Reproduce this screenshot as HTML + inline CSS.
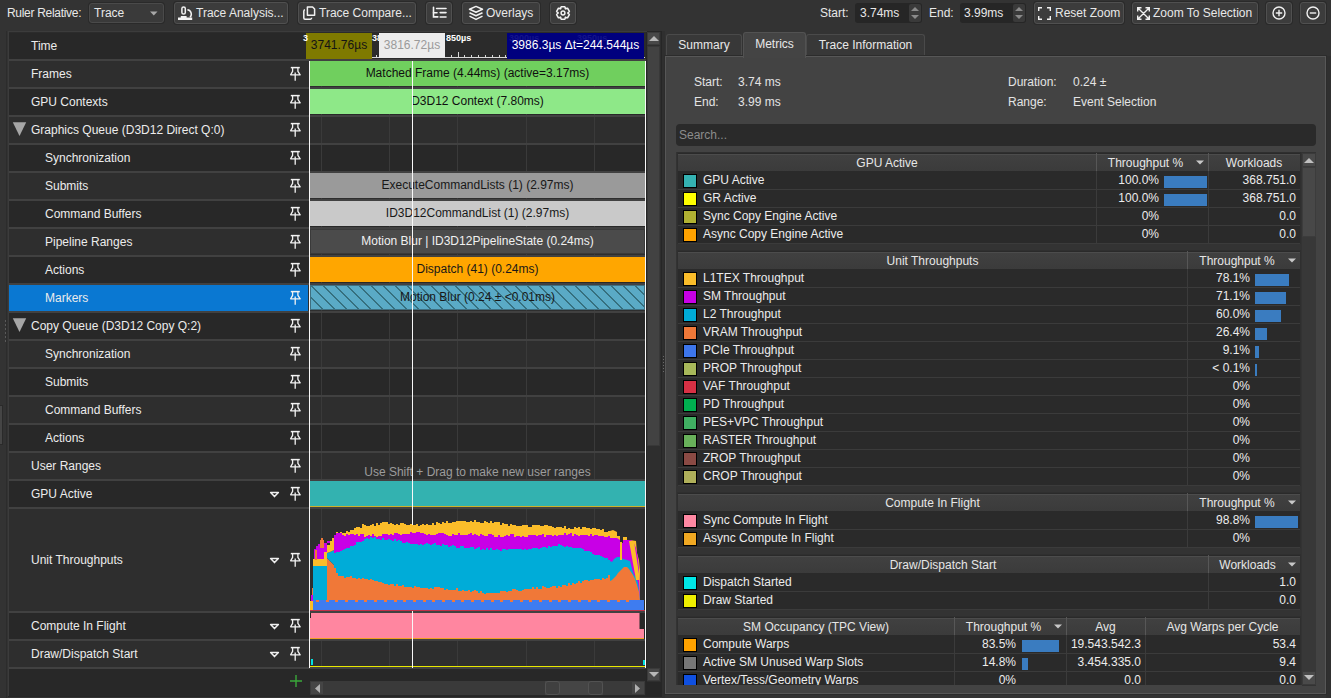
<!DOCTYPE html><html><head><meta charset="utf-8"><style>
html,body{margin:0;padding:0;}
body{width:1331px;height:698px;overflow:hidden;position:relative;background:#333333;font-family:"Liberation Sans",sans-serif;}
.t{position:absolute;white-space:pre;line-height:14px;height:14px;}
.r{position:absolute;box-sizing:border-box;}
.btn{position:absolute;box-sizing:border-box;background:#3c3c3c;border:1px solid #505050;border-radius:3px;box-shadow:0 0 0 1px #2a2a2a;}
svg{position:absolute;overflow:visible;}
</style></head><body>
<div class="t" style="left:7px;top:6px;color:#e8e8e8;font-size:12px;letter-spacing:-0.3px;">Ruler Relative:</div>
<div class="btn" style="left:89px;top:3px;width:75px;height:20px;background:#3a3a3a;border-color:#4a4a4a"></div>
<div class="t" style="left:94px;top:6px;color:#e8e8e8;font-size:12px;">Trace</div>
<svg style="left:150px;top:11px" width="8" height="5"><path d="M0 0.5H7.5L3.75 4.5Z" fill="#a8a8a8"/></svg>
<div class="btn" style="left:174px;top:2px;width:114px;height:22px"></div>
<div class="btn" style="left:298px;top:2px;width:118px;height:22px"></div>
<div class="btn" style="left:426px;top:2px;width:26px;height:22px"></div>
<div class="btn" style="left:462px;top:2px;width:78px;height:22px"></div>
<div class="btn" style="left:550px;top:2px;width:26px;height:22px"></div>
<svg style="left:175px;top:2px" width="22" height="22" viewBox="0 0 22 22"><g fill="none" stroke="#f2f2f2" stroke-width="1.5"><rect x="6.9" y="4.9" width="3.4" height="7.2" rx="1.7"/><path d="M12.4 7.7A4.4 4.4 0 0 1 15 15.2"/></g><path d="M5.8 14H11.6V15.5H17.2V18H3V15.5H5.8Z" fill="#f2f2f2"/></svg>
<div class="t" style="left:196px;top:6px;color:#e8e8e8;font-size:12px;">Trace Analysis...</div>
<svg style="left:299px;top:2px" width="22" height="22" viewBox="0 0 22 22"><g fill="none" stroke="#f2f2f2" stroke-width="1.5" stroke-linejoin="round"><path d="M8.4 4.9H13.6L15.6 7V13.2H8.4Z"/><path d="M6 7.8Q4.8 8 4.8 9.2V16Q4.8 17.2 6 17.2H11.4Q12.6 17.2 12.7 15.8"/></g></svg>
<div class="t" style="left:319px;top:6px;color:#e8e8e8;font-size:12px;">Trace Compare...</div>
<svg style="left:428px;top:2px" width="22" height="22" viewBox="0 0 22 22"><g fill="none" stroke="#f2f2f2" stroke-width="1.6" stroke-linecap="round"><path d="M5.5 5.2V14.9H9.8"/><path d="M5.5 10.7H9"/><path d="M8.6 6.5H18M12.2 10.6H18M12.2 15H18"/></g></svg>
<svg style="left:465px;top:2px" width="22" height="22" viewBox="0 0 22 22"><g fill="none" stroke="#f2f2f2" stroke-width="1.5" stroke-linejoin="round"><path d="M11 4.4L17.5 7.3 11 10.3 4.5 7.3Z"/><path d="M4.5 10.8L11 13.8 17.5 10.8"/><path d="M4.5 14.1L11 17.4 17.5 14.1"/></g></svg>
<div class="t" style="left:486px;top:6px;color:#e8e8e8;font-size:12px;">Overlays</div>
<svg style="left:556px;top:6px" width="14" height="14" viewBox="0 0 14 14"><g fill="none" stroke="#f2f2f2" stroke-width="1.5" stroke-linejoin="round"><path d="M4.26 2.94 L5.18 0.66 L8.82 0.66 L9.74 2.94 L9.15 2.60 L11.58 2.25 L13.40 5.40 L11.89 7.34 L11.89 6.66 L13.40 8.60 L11.58 11.75 L9.15 11.40 L9.74 11.06 L8.82 13.34 L5.18 13.34 L4.26 11.06 L4.85 11.40 L2.42 11.75 L0.60 8.60 L2.11 6.66 L2.11 7.34 L0.60 5.40 L2.42 2.25 L4.85 2.60Z"/><circle cx="7" cy="7" r="1.9"/></g></svg>
<div class="t" style="left:820px;top:6px;color:#e8e8e8;font-size:12px;">Start:</div>
<div class="r" style="left:855px;top:3px;width:67px;height:20px;background:#262626;border-radius:3px;"></div>
<div class="r" style="left:909px;top:4px;width:12px;height:18px;background:#3a3a3a;border-radius:2px;"></div>
<svg style="left:910px;top:6px" width="10" height="14"><path d="M1 5L5 1 9 5Z M1 9L5 13 9 9Z" fill="#8a8a8a"/></svg>
<div class="t" style="left:860px;top:6px;color:#e8e8e8;font-size:12px;">3.74ms</div>
<div class="t" style="left:929px;top:6px;color:#e8e8e8;font-size:12px;">End:</div>
<div class="r" style="left:960px;top:3px;width:66px;height:20px;background:#262626;border-radius:3px;"></div>
<div class="r" style="left:1013px;top:4px;width:12px;height:18px;background:#3a3a3a;border-radius:2px;"></div>
<svg style="left:1014px;top:6px" width="10" height="14"><path d="M1 5L5 1 9 5Z M1 9L5 13 9 9Z" fill="#8a8a8a"/></svg>
<div class="t" style="left:964px;top:6px;color:#e8e8e8;font-size:12px;">3.99ms</div>
<div class="btn" style="left:1034px;top:2px;width:90px;height:22px"></div>
<svg style="left:1038px;top:7px" width="13" height="13" viewBox="0 0 13 13"><g fill="none" stroke="#f0f0f0" stroke-width="1.4"><path d="M.7 4V.7H4M9 .7h3.3V4M12.3 9v3.3H9M4 12.3H.7V9"/></g></svg>
<div class="t" style="left:1055px;top:6px;color:#e8e8e8;font-size:12px;">Reset Zoom</div>
<div class="btn" style="left:1132px;top:2px;width:126px;height:22px"></div>
<svg style="left:1137px;top:7px" width="13" height="13" viewBox="0 0 13 13"><g fill="none" stroke="#f0f0f0" stroke-width="1.4"><path d="M.7 4.5V.7h3.8M8.5.7h3.8v3.8M12.3 8.5v3.8H8.5M4.5 12.3H.7V8.5M1 1l11 11M12 1L1 12"/></g></svg>
<div class="t" style="left:1153px;top:6px;color:#e8e8e8;font-size:12px;">Zoom To Selection</div>
<div class="btn" style="left:1266px;top:2px;width:26px;height:22px"></div>
<div class="btn" style="left:1300px;top:2px;width:26px;height:22px"></div>
<svg style="left:1272px;top:6px" width="14" height="14" viewBox="0 0 14 14"><g fill="none" stroke="#f0f0f0" stroke-width="1.4"><circle cx="7" cy="7" r="6"/><path d="M3.8 7h6.4M7 3.8v6.4"/></g></svg>
<svg style="left:1306px;top:6px" width="14" height="14" viewBox="0 0 14 14"><g fill="none" stroke="#f0f0f0" stroke-width="1.4"><circle cx="7" cy="7" r="6"/><path d="M3.8 7h6.4"/></g></svg>
<div class="r" style="left:8px;top:31px;width:654px;height:666px;background:#262626;"></div>
<div class="r" style="left:8px;top:31px;width:639px;height:1px;background:#3c3c3c;"></div>
<div class="r" style="left:8px;top:31px;width:1px;height:665px;background:#3c3c3c;"></div>
<div class="r" style="left:9px;top:32px;width:299px;height:664px;background:#2c2c2c;"></div>
<div class="r" style="left:308px;top:32px;width:338px;height:664px;background:#2b2b2b;"></div>
<div class="r" style="left:5px;top:320px;width:2px;height:2px;background:#5a5a5a;"></div>
<div class="r" style="left:5px;top:324px;width:2px;height:2px;background:#5a5a5a;"></div>
<div class="r" style="left:5px;top:328px;width:2px;height:2px;background:#5a5a5a;"></div>
<div class="r" style="left:5px;top:332px;width:2px;height:2px;background:#5a5a5a;"></div>
<div class="r" style="left:5px;top:336px;width:2px;height:2px;background:#5a5a5a;"></div>
<div class="r" style="left:5px;top:340px;width:2px;height:2px;background:#5a5a5a;"></div>
<div class="r" style="left:0px;top:405px;width:3px;height:40px;background:#454545;border:1px solid #2a2a2a;border-left:none;"></div>
<div class="r" style="left:6px;top:31px;width:1px;height:667px;background:#2c2c2c;"></div>
<div class="r" style="left:9px;top:33px;width:637px;height:26px;background:#282828;"></div>
<div class="r" style="left:9px;top:61px;width:637px;height:26px;background:#2e2e2e;"></div>
<div class="r" style="left:9px;top:89px;width:637px;height:26px;background:#282828;"></div>
<div class="r" style="left:9px;top:117px;width:637px;height:26px;background:#2e2e2e;"></div>
<div class="r" style="left:9px;top:145px;width:637px;height:26px;background:#282828;"></div>
<div class="r" style="left:9px;top:173px;width:637px;height:26px;background:#2e2e2e;"></div>
<div class="r" style="left:9px;top:201px;width:637px;height:26px;background:#282828;"></div>
<div class="r" style="left:9px;top:229px;width:637px;height:26px;background:#2e2e2e;"></div>
<div class="r" style="left:9px;top:257px;width:637px;height:26px;background:#282828;"></div>
<div class="r" style="left:9px;top:285px;width:637px;height:26px;background:#2e2e2e;"></div>
<div class="r" style="left:9px;top:313px;width:637px;height:26px;background:#282828;"></div>
<div class="r" style="left:9px;top:341px;width:637px;height:26px;background:#2e2e2e;"></div>
<div class="r" style="left:9px;top:369px;width:637px;height:26px;background:#282828;"></div>
<div class="r" style="left:9px;top:397px;width:637px;height:26px;background:#2e2e2e;"></div>
<div class="r" style="left:9px;top:425px;width:637px;height:26px;background:#282828;"></div>
<div class="r" style="left:9px;top:453px;width:637px;height:26px;background:#2e2e2e;"></div>
<div class="r" style="left:9px;top:481px;width:637px;height:26px;background:#282828;"></div>
<div class="r" style="left:9px;top:509px;width:637px;height:102px;background:#2e2e2e;"></div>
<div class="r" style="left:9px;top:613px;width:637px;height:26px;background:#282828;"></div>
<div class="r" style="left:9px;top:641px;width:637px;height:26px;background:#2e2e2e;"></div>
<div class="r" style="left:9px;top:669px;width:637px;height:27px;background:#282828;"></div>
<div class="r" style="left:9px;top:59px;width:637px;height:2px;background:#414141;"></div>
<div class="r" style="left:9px;top:87px;width:637px;height:2px;background:#414141;"></div>
<div class="r" style="left:9px;top:115px;width:637px;height:2px;background:#414141;"></div>
<div class="r" style="left:9px;top:143px;width:637px;height:2px;background:#414141;"></div>
<div class="r" style="left:9px;top:171px;width:637px;height:2px;background:#414141;"></div>
<div class="r" style="left:9px;top:199px;width:637px;height:2px;background:#414141;"></div>
<div class="r" style="left:9px;top:227px;width:637px;height:2px;background:#414141;"></div>
<div class="r" style="left:9px;top:255px;width:637px;height:2px;background:#414141;"></div>
<div class="r" style="left:9px;top:283px;width:637px;height:2px;background:#414141;"></div>
<div class="r" style="left:9px;top:311px;width:637px;height:2px;background:#414141;"></div>
<div class="r" style="left:9px;top:339px;width:637px;height:2px;background:#414141;"></div>
<div class="r" style="left:9px;top:367px;width:637px;height:2px;background:#414141;"></div>
<div class="r" style="left:9px;top:395px;width:637px;height:2px;background:#414141;"></div>
<div class="r" style="left:9px;top:423px;width:637px;height:2px;background:#414141;"></div>
<div class="r" style="left:9px;top:451px;width:637px;height:2px;background:#414141;"></div>
<div class="r" style="left:9px;top:479px;width:637px;height:2px;background:#414141;"></div>
<div class="r" style="left:9px;top:507px;width:637px;height:2px;background:#414141;"></div>
<div class="r" style="left:9px;top:611px;width:637px;height:2px;background:#414141;"></div>
<div class="r" style="left:9px;top:639px;width:637px;height:2px;background:#414141;"></div>
<div class="r" style="left:9px;top:667px;width:637px;height:2px;background:#414141;"></div>
<div class="r" style="left:9px;top:285px;width:299px;height:26px;background:#0a78d2;"></div>
<div class="t" style="left:31px;top:39px;color:#ececec;font-size:12px;">Time</div>
<div class="t" style="left:31px;top:67px;color:#ececec;font-size:12px;">Frames</div>
<svg style="left:284px;top:64px" width="22" height="22" viewBox="0 0 22 22"><g fill="none" stroke="#f2f2f2" stroke-width="1.3" stroke-linejoin="round"><path d="M6.8 3.6H15.8" stroke-width="1.5"/><path d="M8.6 3.6V7.4L6.6 10.8H16.2L13.9 7.4V3.6"/><path d="M11.2 8.4V16.8"/></g></svg>
<div class="t" style="left:31px;top:95px;color:#ececec;font-size:12px;">GPU Contexts</div>
<svg style="left:284px;top:92px" width="22" height="22" viewBox="0 0 22 22"><g fill="none" stroke="#f2f2f2" stroke-width="1.3" stroke-linejoin="round"><path d="M6.8 3.6H15.8" stroke-width="1.5"/><path d="M8.6 3.6V7.4L6.6 10.8H16.2L13.9 7.4V3.6"/><path d="M11.2 8.4V16.8"/></g></svg>
<div class="t" style="left:31px;top:123px;color:#ececec;font-size:12px;">Graphics Queue (D3D12 Direct Q:0)</div>
<svg style="left:284px;top:120px" width="22" height="22" viewBox="0 0 22 22"><g fill="none" stroke="#f2f2f2" stroke-width="1.3" stroke-linejoin="round"><path d="M6.8 3.6H15.8" stroke-width="1.5"/><path d="M8.6 3.6V7.4L6.6 10.8H16.2L13.9 7.4V3.6"/><path d="M11.2 8.4V16.8"/></g></svg>
<svg style="left:12px;top:122px" width="15" height="15" viewBox="0 0 15 15"><path d="M0.8 0.3H14.2L7.5 13.9Z" fill="#a6a6a6"/></svg>
<div class="t" style="left:45px;top:151px;color:#ececec;font-size:12px;">Synchronization</div>
<svg style="left:284px;top:148px" width="22" height="22" viewBox="0 0 22 22"><g fill="none" stroke="#f2f2f2" stroke-width="1.3" stroke-linejoin="round"><path d="M6.8 3.6H15.8" stroke-width="1.5"/><path d="M8.6 3.6V7.4L6.6 10.8H16.2L13.9 7.4V3.6"/><path d="M11.2 8.4V16.8"/></g></svg>
<div class="t" style="left:45px;top:179px;color:#ececec;font-size:12px;">Submits</div>
<svg style="left:284px;top:176px" width="22" height="22" viewBox="0 0 22 22"><g fill="none" stroke="#f2f2f2" stroke-width="1.3" stroke-linejoin="round"><path d="M6.8 3.6H15.8" stroke-width="1.5"/><path d="M8.6 3.6V7.4L6.6 10.8H16.2L13.9 7.4V3.6"/><path d="M11.2 8.4V16.8"/></g></svg>
<div class="t" style="left:45px;top:207px;color:#ececec;font-size:12px;">Command Buffers</div>
<svg style="left:284px;top:204px" width="22" height="22" viewBox="0 0 22 22"><g fill="none" stroke="#f2f2f2" stroke-width="1.3" stroke-linejoin="round"><path d="M6.8 3.6H15.8" stroke-width="1.5"/><path d="M8.6 3.6V7.4L6.6 10.8H16.2L13.9 7.4V3.6"/><path d="M11.2 8.4V16.8"/></g></svg>
<div class="t" style="left:45px;top:235px;color:#ececec;font-size:12px;">Pipeline Ranges</div>
<svg style="left:284px;top:232px" width="22" height="22" viewBox="0 0 22 22"><g fill="none" stroke="#f2f2f2" stroke-width="1.3" stroke-linejoin="round"><path d="M6.8 3.6H15.8" stroke-width="1.5"/><path d="M8.6 3.6V7.4L6.6 10.8H16.2L13.9 7.4V3.6"/><path d="M11.2 8.4V16.8"/></g></svg>
<div class="t" style="left:45px;top:263px;color:#ececec;font-size:12px;">Actions</div>
<svg style="left:284px;top:260px" width="22" height="22" viewBox="0 0 22 22"><g fill="none" stroke="#f2f2f2" stroke-width="1.3" stroke-linejoin="round"><path d="M6.8 3.6H15.8" stroke-width="1.5"/><path d="M8.6 3.6V7.4L6.6 10.8H16.2L13.9 7.4V3.6"/><path d="M11.2 8.4V16.8"/></g></svg>
<div class="t" style="left:45px;top:291px;color:#ececec;font-size:12px;">Markers</div>
<svg style="left:284px;top:288px" width="22" height="22" viewBox="0 0 22 22"><g fill="none" stroke="#f2f2f2" stroke-width="1.3" stroke-linejoin="round"><path d="M6.8 3.6H15.8" stroke-width="1.5"/><path d="M8.6 3.6V7.4L6.6 10.8H16.2L13.9 7.4V3.6"/><path d="M11.2 8.4V16.8"/></g></svg>
<div class="t" style="left:31px;top:319px;color:#ececec;font-size:12px;">Copy Queue (D3D12 Copy Q:2)</div>
<svg style="left:284px;top:316px" width="22" height="22" viewBox="0 0 22 22"><g fill="none" stroke="#f2f2f2" stroke-width="1.3" stroke-linejoin="round"><path d="M6.8 3.6H15.8" stroke-width="1.5"/><path d="M8.6 3.6V7.4L6.6 10.8H16.2L13.9 7.4V3.6"/><path d="M11.2 8.4V16.8"/></g></svg>
<svg style="left:12px;top:318px" width="15" height="15" viewBox="0 0 15 15"><path d="M0.8 0.3H14.2L7.5 13.9Z" fill="#a6a6a6"/></svg>
<div class="t" style="left:45px;top:347px;color:#ececec;font-size:12px;">Synchronization</div>
<svg style="left:284px;top:344px" width="22" height="22" viewBox="0 0 22 22"><g fill="none" stroke="#f2f2f2" stroke-width="1.3" stroke-linejoin="round"><path d="M6.8 3.6H15.8" stroke-width="1.5"/><path d="M8.6 3.6V7.4L6.6 10.8H16.2L13.9 7.4V3.6"/><path d="M11.2 8.4V16.8"/></g></svg>
<div class="t" style="left:45px;top:375px;color:#ececec;font-size:12px;">Submits</div>
<svg style="left:284px;top:372px" width="22" height="22" viewBox="0 0 22 22"><g fill="none" stroke="#f2f2f2" stroke-width="1.3" stroke-linejoin="round"><path d="M6.8 3.6H15.8" stroke-width="1.5"/><path d="M8.6 3.6V7.4L6.6 10.8H16.2L13.9 7.4V3.6"/><path d="M11.2 8.4V16.8"/></g></svg>
<div class="t" style="left:45px;top:403px;color:#ececec;font-size:12px;">Command Buffers</div>
<svg style="left:284px;top:400px" width="22" height="22" viewBox="0 0 22 22"><g fill="none" stroke="#f2f2f2" stroke-width="1.3" stroke-linejoin="round"><path d="M6.8 3.6H15.8" stroke-width="1.5"/><path d="M8.6 3.6V7.4L6.6 10.8H16.2L13.9 7.4V3.6"/><path d="M11.2 8.4V16.8"/></g></svg>
<div class="t" style="left:45px;top:431px;color:#ececec;font-size:12px;">Actions</div>
<svg style="left:284px;top:428px" width="22" height="22" viewBox="0 0 22 22"><g fill="none" stroke="#f2f2f2" stroke-width="1.3" stroke-linejoin="round"><path d="M6.8 3.6H15.8" stroke-width="1.5"/><path d="M8.6 3.6V7.4L6.6 10.8H16.2L13.9 7.4V3.6"/><path d="M11.2 8.4V16.8"/></g></svg>
<div class="t" style="left:31px;top:459px;color:#ececec;font-size:12px;">User Ranges</div>
<svg style="left:284px;top:456px" width="22" height="22" viewBox="0 0 22 22"><g fill="none" stroke="#f2f2f2" stroke-width="1.3" stroke-linejoin="round"><path d="M6.8 3.6H15.8" stroke-width="1.5"/><path d="M8.6 3.6V7.4L6.6 10.8H16.2L13.9 7.4V3.6"/><path d="M11.2 8.4V16.8"/></g></svg>
<div class="t" style="left:31px;top:487px;color:#ececec;font-size:12px;">GPU Active</div>
<svg style="left:284px;top:484px" width="22" height="22" viewBox="0 0 22 22"><g fill="none" stroke="#f2f2f2" stroke-width="1.3" stroke-linejoin="round"><path d="M6.8 3.6H15.8" stroke-width="1.5"/><path d="M8.6 3.6V7.4L6.6 10.8H16.2L13.9 7.4V3.6"/><path d="M11.2 8.4V16.8"/></g></svg>
<svg style="left:269px;top:491px" width="11" height="7" viewBox="0 0 11 7"><path d="M1.6 1.5H9.4L5.5 5.6Z" fill="none" stroke="#f0f0f0" stroke-width="1.5" stroke-linejoin="round"/></svg>
<div class="t" style="left:31px;top:553px;color:#ececec;font-size:12px;">Unit Throughputs</div>
<svg style="left:284px;top:550px" width="22" height="22" viewBox="0 0 22 22"><g fill="none" stroke="#f2f2f2" stroke-width="1.3" stroke-linejoin="round"><path d="M6.8 3.6H15.8" stroke-width="1.5"/><path d="M8.6 3.6V7.4L6.6 10.8H16.2L13.9 7.4V3.6"/><path d="M11.2 8.4V16.8"/></g></svg>
<svg style="left:269px;top:557px" width="11" height="7" viewBox="0 0 11 7"><path d="M1.6 1.5H9.4L5.5 5.6Z" fill="none" stroke="#f0f0f0" stroke-width="1.5" stroke-linejoin="round"/></svg>
<div class="t" style="left:31px;top:619px;color:#ececec;font-size:12px;">Compute In Flight</div>
<svg style="left:284px;top:616px" width="22" height="22" viewBox="0 0 22 22"><g fill="none" stroke="#f2f2f2" stroke-width="1.3" stroke-linejoin="round"><path d="M6.8 3.6H15.8" stroke-width="1.5"/><path d="M8.6 3.6V7.4L6.6 10.8H16.2L13.9 7.4V3.6"/><path d="M11.2 8.4V16.8"/></g></svg>
<svg style="left:269px;top:623px" width="11" height="7" viewBox="0 0 11 7"><path d="M1.6 1.5H9.4L5.5 5.6Z" fill="none" stroke="#f0f0f0" stroke-width="1.5" stroke-linejoin="round"/></svg>
<div class="t" style="left:31px;top:647px;color:#ececec;font-size:12px;">Draw/Dispatch Start</div>
<svg style="left:284px;top:644px" width="22" height="22" viewBox="0 0 22 22"><g fill="none" stroke="#f2f2f2" stroke-width="1.3" stroke-linejoin="round"><path d="M6.8 3.6H15.8" stroke-width="1.5"/><path d="M8.6 3.6V7.4L6.6 10.8H16.2L13.9 7.4V3.6"/><path d="M11.2 8.4V16.8"/></g></svg>
<svg style="left:269px;top:651px" width="11" height="7" viewBox="0 0 11 7"><path d="M1.6 1.5H9.4L5.5 5.6Z" fill="none" stroke="#f0f0f0" stroke-width="1.5" stroke-linejoin="round"/></svg>
<svg style="left:290px;top:675px" width="12" height="12"><path d="M6 0V12M0 6H12" stroke="#3aa83a" stroke-width="1.4"/></svg>
<div class="r" style="left:321px;top:61px;width:1px;height:26px;background:#3a3a3a;"></div>
<div class="r" style="left:321px;top:89px;width:1px;height:26px;background:#3a3a3a;"></div>
<div class="r" style="left:321px;top:117px;width:1px;height:26px;background:#3a3a3a;"></div>
<div class="r" style="left:321px;top:145px;width:1px;height:26px;background:#3a3a3a;"></div>
<div class="r" style="left:321px;top:173px;width:1px;height:26px;background:#3a3a3a;"></div>
<div class="r" style="left:321px;top:201px;width:1px;height:26px;background:#3a3a3a;"></div>
<div class="r" style="left:321px;top:229px;width:1px;height:26px;background:#3a3a3a;"></div>
<div class="r" style="left:321px;top:257px;width:1px;height:26px;background:#3a3a3a;"></div>
<div class="r" style="left:321px;top:285px;width:1px;height:26px;background:#3a3a3a;"></div>
<div class="r" style="left:321px;top:313px;width:1px;height:26px;background:#3a3a3a;"></div>
<div class="r" style="left:321px;top:341px;width:1px;height:26px;background:#3a3a3a;"></div>
<div class="r" style="left:321px;top:369px;width:1px;height:26px;background:#3a3a3a;"></div>
<div class="r" style="left:321px;top:397px;width:1px;height:26px;background:#3a3a3a;"></div>
<div class="r" style="left:321px;top:425px;width:1px;height:26px;background:#3a3a3a;"></div>
<div class="r" style="left:321px;top:453px;width:1px;height:26px;background:#3a3a3a;"></div>
<div class="r" style="left:321px;top:481px;width:1px;height:26px;background:#3a3a3a;"></div>
<div class="r" style="left:321px;top:509px;width:1px;height:102px;background:#3a3a3a;"></div>
<div class="r" style="left:321px;top:613px;width:1px;height:26px;background:#3a3a3a;"></div>
<div class="r" style="left:321px;top:641px;width:1px;height:26px;background:#3a3a3a;"></div>
<div class="r" style="left:389px;top:61px;width:1px;height:26px;background:#3a3a3a;"></div>
<div class="r" style="left:389px;top:89px;width:1px;height:26px;background:#3a3a3a;"></div>
<div class="r" style="left:389px;top:117px;width:1px;height:26px;background:#3a3a3a;"></div>
<div class="r" style="left:389px;top:145px;width:1px;height:26px;background:#3a3a3a;"></div>
<div class="r" style="left:389px;top:173px;width:1px;height:26px;background:#3a3a3a;"></div>
<div class="r" style="left:389px;top:201px;width:1px;height:26px;background:#3a3a3a;"></div>
<div class="r" style="left:389px;top:229px;width:1px;height:26px;background:#3a3a3a;"></div>
<div class="r" style="left:389px;top:257px;width:1px;height:26px;background:#3a3a3a;"></div>
<div class="r" style="left:389px;top:285px;width:1px;height:26px;background:#3a3a3a;"></div>
<div class="r" style="left:389px;top:313px;width:1px;height:26px;background:#3a3a3a;"></div>
<div class="r" style="left:389px;top:341px;width:1px;height:26px;background:#3a3a3a;"></div>
<div class="r" style="left:389px;top:369px;width:1px;height:26px;background:#3a3a3a;"></div>
<div class="r" style="left:389px;top:397px;width:1px;height:26px;background:#3a3a3a;"></div>
<div class="r" style="left:389px;top:425px;width:1px;height:26px;background:#3a3a3a;"></div>
<div class="r" style="left:389px;top:453px;width:1px;height:26px;background:#3a3a3a;"></div>
<div class="r" style="left:389px;top:481px;width:1px;height:26px;background:#3a3a3a;"></div>
<div class="r" style="left:389px;top:509px;width:1px;height:102px;background:#3a3a3a;"></div>
<div class="r" style="left:389px;top:613px;width:1px;height:26px;background:#3a3a3a;"></div>
<div class="r" style="left:389px;top:641px;width:1px;height:26px;background:#3a3a3a;"></div>
<div class="r" style="left:457px;top:61px;width:1px;height:26px;background:#3a3a3a;"></div>
<div class="r" style="left:457px;top:89px;width:1px;height:26px;background:#3a3a3a;"></div>
<div class="r" style="left:457px;top:117px;width:1px;height:26px;background:#3a3a3a;"></div>
<div class="r" style="left:457px;top:145px;width:1px;height:26px;background:#3a3a3a;"></div>
<div class="r" style="left:457px;top:173px;width:1px;height:26px;background:#3a3a3a;"></div>
<div class="r" style="left:457px;top:201px;width:1px;height:26px;background:#3a3a3a;"></div>
<div class="r" style="left:457px;top:229px;width:1px;height:26px;background:#3a3a3a;"></div>
<div class="r" style="left:457px;top:257px;width:1px;height:26px;background:#3a3a3a;"></div>
<div class="r" style="left:457px;top:285px;width:1px;height:26px;background:#3a3a3a;"></div>
<div class="r" style="left:457px;top:313px;width:1px;height:26px;background:#3a3a3a;"></div>
<div class="r" style="left:457px;top:341px;width:1px;height:26px;background:#3a3a3a;"></div>
<div class="r" style="left:457px;top:369px;width:1px;height:26px;background:#3a3a3a;"></div>
<div class="r" style="left:457px;top:397px;width:1px;height:26px;background:#3a3a3a;"></div>
<div class="r" style="left:457px;top:425px;width:1px;height:26px;background:#3a3a3a;"></div>
<div class="r" style="left:457px;top:453px;width:1px;height:26px;background:#3a3a3a;"></div>
<div class="r" style="left:457px;top:481px;width:1px;height:26px;background:#3a3a3a;"></div>
<div class="r" style="left:457px;top:509px;width:1px;height:102px;background:#3a3a3a;"></div>
<div class="r" style="left:457px;top:613px;width:1px;height:26px;background:#3a3a3a;"></div>
<div class="r" style="left:457px;top:641px;width:1px;height:26px;background:#3a3a3a;"></div>
<div class="r" style="left:526px;top:61px;width:1px;height:26px;background:#3a3a3a;"></div>
<div class="r" style="left:526px;top:89px;width:1px;height:26px;background:#3a3a3a;"></div>
<div class="r" style="left:526px;top:117px;width:1px;height:26px;background:#3a3a3a;"></div>
<div class="r" style="left:526px;top:145px;width:1px;height:26px;background:#3a3a3a;"></div>
<div class="r" style="left:526px;top:173px;width:1px;height:26px;background:#3a3a3a;"></div>
<div class="r" style="left:526px;top:201px;width:1px;height:26px;background:#3a3a3a;"></div>
<div class="r" style="left:526px;top:229px;width:1px;height:26px;background:#3a3a3a;"></div>
<div class="r" style="left:526px;top:257px;width:1px;height:26px;background:#3a3a3a;"></div>
<div class="r" style="left:526px;top:285px;width:1px;height:26px;background:#3a3a3a;"></div>
<div class="r" style="left:526px;top:313px;width:1px;height:26px;background:#3a3a3a;"></div>
<div class="r" style="left:526px;top:341px;width:1px;height:26px;background:#3a3a3a;"></div>
<div class="r" style="left:526px;top:369px;width:1px;height:26px;background:#3a3a3a;"></div>
<div class="r" style="left:526px;top:397px;width:1px;height:26px;background:#3a3a3a;"></div>
<div class="r" style="left:526px;top:425px;width:1px;height:26px;background:#3a3a3a;"></div>
<div class="r" style="left:526px;top:453px;width:1px;height:26px;background:#3a3a3a;"></div>
<div class="r" style="left:526px;top:481px;width:1px;height:26px;background:#3a3a3a;"></div>
<div class="r" style="left:526px;top:509px;width:1px;height:102px;background:#3a3a3a;"></div>
<div class="r" style="left:526px;top:613px;width:1px;height:26px;background:#3a3a3a;"></div>
<div class="r" style="left:526px;top:641px;width:1px;height:26px;background:#3a3a3a;"></div>
<div class="r" style="left:594px;top:61px;width:1px;height:26px;background:#3a3a3a;"></div>
<div class="r" style="left:594px;top:89px;width:1px;height:26px;background:#3a3a3a;"></div>
<div class="r" style="left:594px;top:117px;width:1px;height:26px;background:#3a3a3a;"></div>
<div class="r" style="left:594px;top:145px;width:1px;height:26px;background:#3a3a3a;"></div>
<div class="r" style="left:594px;top:173px;width:1px;height:26px;background:#3a3a3a;"></div>
<div class="r" style="left:594px;top:201px;width:1px;height:26px;background:#3a3a3a;"></div>
<div class="r" style="left:594px;top:229px;width:1px;height:26px;background:#3a3a3a;"></div>
<div class="r" style="left:594px;top:257px;width:1px;height:26px;background:#3a3a3a;"></div>
<div class="r" style="left:594px;top:285px;width:1px;height:26px;background:#3a3a3a;"></div>
<div class="r" style="left:594px;top:313px;width:1px;height:26px;background:#3a3a3a;"></div>
<div class="r" style="left:594px;top:341px;width:1px;height:26px;background:#3a3a3a;"></div>
<div class="r" style="left:594px;top:369px;width:1px;height:26px;background:#3a3a3a;"></div>
<div class="r" style="left:594px;top:397px;width:1px;height:26px;background:#3a3a3a;"></div>
<div class="r" style="left:594px;top:425px;width:1px;height:26px;background:#3a3a3a;"></div>
<div class="r" style="left:594px;top:453px;width:1px;height:26px;background:#3a3a3a;"></div>
<div class="r" style="left:594px;top:481px;width:1px;height:26px;background:#3a3a3a;"></div>
<div class="r" style="left:594px;top:509px;width:1px;height:102px;background:#3a3a3a;"></div>
<div class="r" style="left:594px;top:613px;width:1px;height:26px;background:#3a3a3a;"></div>
<div class="r" style="left:594px;top:641px;width:1px;height:26px;background:#3a3a3a;"></div>
<div class="r" style="left:310px;top:61px;width:335px;height:25px;background:#70cf5e;"></div>
<div class="t" style="left:310px;width:335px;text-align:center;top:66px;color:#101010;font-size:12px;">Matched Frame (4.44ms) (active=3.17ms)</div>
<div class="r" style="left:310px;top:89px;width:335px;height:25px;background:#8ee888;"></div>
<div class="t" style="left:310px;width:335px;text-align:center;top:94px;color:#101010;font-size:12px;">D3D12 Context (7.80ms)</div>
<div class="r" style="left:310px;top:173px;width:335px;height:25px;background:#9a9a9a;"></div>
<div class="t" style="left:310px;width:335px;text-align:center;top:178px;color:#181818;font-size:12px;">ExecuteCommandLists (1) (2.97ms)</div>
<div class="r" style="left:310px;top:201px;width:335px;height:25px;background:#c9c9c9;"></div>
<div class="t" style="left:310px;width:335px;text-align:center;top:206px;color:#181818;font-size:12px;">ID3D12CommandList (1) (2.97ms)</div>
<div class="r" style="left:310px;top:229px;width:335px;height:25px;background:#4b4b4b;border:1px solid #3a3a3a;"></div>
<div class="t" style="left:310px;width:335px;text-align:center;top:234px;color:#f0f0f0;font-size:12px;">Motion Blur | ID3D12PipelineState (0.24ms)</div>
<div class="r" style="left:310px;top:257px;width:335px;height:25px;background:#ffa600;"></div>
<div class="t" style="left:310px;width:335px;text-align:center;top:262px;color:#181818;font-size:12px;">Dispatch (41) (0.24ms)</div>
<div class="r" style="left:310px;top:285px;width:335px;height:25px;background:repeating-linear-gradient(45deg,#5aaac6 0px,#5aaac6 7.3px,#36707f 7.3px,#36707f 8.5px);border:1px solid #3f6f80;"></div>
<div class="t" style="left:310px;width:335px;text-align:center;top:290px;color:#181818;font-size:12px;">Motion Blur (0.24 ± &lt;0.01ms)</div>
<div class="t" style="left:310px;width:335px;text-align:center;top:465px;color:#9c9c9c;font-size:12px;">Use Shift + Drag to make new user ranges</div>
<div class="r" style="left:310px;top:481px;width:335px;height:25px;background:#33b2b0;"></div>
<div class="r" style="left:310px;top:506px;width:335px;height:1px;background:#ccb22a;"></div>
<svg style="left:310px;top:612px" width="336" height="28"><path d="M0 26V6H1V1H329.5V17H331V26Z" fill="#ff86a0"/><path d="M329.5 17H334V26H331Z" fill="#ff86a0"/><rect x="0" y="26" width="334" height="1" fill="#f0a020"/></svg>
<div class="r" style="left:310px;top:666px;width:335px;height:1px;background:#e8e800;"></div>
<div class="r" style="left:311px;top:659px;width:2px;height:6px;background:#00e0e0;"></div>
<div class="r" style="left:643px;top:660px;width:2px;height:5px;background:#00e0e0;"></div>
<div class="r" style="left:309px;top:61px;width:1px;height:607px;background:#f8f8f8;"></div>
<div class="r" style="left:412px;top:61px;width:1px;height:607px;background:#f8f8f8;"></div>
<div class="r" style="left:645px;top:61px;width:1px;height:607px;background:#f8f8f8;"></div>
<div class="r" style="left:308px;top:33px;width:338px;height:26px;background:#2b2b2b;"></div>
<div class="r" style="left:314px;top:55px;width:1px;height:3px;background:#d8d8d8;"></div>
<div class="r" style="left:321px;top:52px;width:1px;height:6px;background:#d8d8d8;"></div>
<div class="r" style="left:328px;top:55px;width:1px;height:3px;background:#d8d8d8;"></div>
<div class="r" style="left:335px;top:55px;width:1px;height:3px;background:#d8d8d8;"></div>
<div class="r" style="left:342px;top:55px;width:1px;height:3px;background:#d8d8d8;"></div>
<div class="r" style="left:348px;top:55px;width:1px;height:3px;background:#d8d8d8;"></div>
<div class="r" style="left:355px;top:55px;width:1px;height:3px;background:#d8d8d8;"></div>
<div class="r" style="left:362px;top:55px;width:1px;height:3px;background:#d8d8d8;"></div>
<div class="r" style="left:369px;top:55px;width:1px;height:3px;background:#d8d8d8;"></div>
<div class="r" style="left:376px;top:55px;width:1px;height:3px;background:#d8d8d8;"></div>
<div class="r" style="left:382px;top:55px;width:1px;height:3px;background:#d8d8d8;"></div>
<div class="r" style="left:389px;top:52px;width:1px;height:6px;background:#d8d8d8;"></div>
<div class="r" style="left:396px;top:55px;width:1px;height:3px;background:#d8d8d8;"></div>
<div class="r" style="left:403px;top:55px;width:1px;height:3px;background:#d8d8d8;"></div>
<div class="r" style="left:410px;top:55px;width:1px;height:3px;background:#d8d8d8;"></div>
<div class="r" style="left:417px;top:55px;width:1px;height:3px;background:#d8d8d8;"></div>
<div class="r" style="left:423px;top:55px;width:1px;height:3px;background:#d8d8d8;"></div>
<div class="r" style="left:430px;top:55px;width:1px;height:3px;background:#d8d8d8;"></div>
<div class="r" style="left:437px;top:55px;width:1px;height:3px;background:#d8d8d8;"></div>
<div class="r" style="left:444px;top:55px;width:1px;height:3px;background:#d8d8d8;"></div>
<div class="r" style="left:451px;top:55px;width:1px;height:3px;background:#d8d8d8;"></div>
<div class="r" style="left:458px;top:52px;width:1px;height:6px;background:#d8d8d8;"></div>
<div class="r" style="left:464px;top:55px;width:1px;height:3px;background:#d8d8d8;"></div>
<div class="r" style="left:471px;top:55px;width:1px;height:3px;background:#d8d8d8;"></div>
<div class="r" style="left:478px;top:55px;width:1px;height:3px;background:#d8d8d8;"></div>
<div class="r" style="left:485px;top:55px;width:1px;height:3px;background:#d8d8d8;"></div>
<div class="r" style="left:492px;top:55px;width:1px;height:3px;background:#d8d8d8;"></div>
<div class="r" style="left:499px;top:55px;width:1px;height:3px;background:#d8d8d8;"></div>
<div class="r" style="left:505px;top:55px;width:1px;height:3px;background:#d8d8d8;"></div>
<div class="r" style="left:512px;top:55px;width:1px;height:3px;background:#d8d8d8;"></div>
<div class="r" style="left:519px;top:55px;width:1px;height:3px;background:#d8d8d8;"></div>
<div class="r" style="left:526px;top:52px;width:1px;height:6px;background:#d8d8d8;"></div>
<div class="r" style="left:533px;top:55px;width:1px;height:3px;background:#d8d8d8;"></div>
<div class="r" style="left:540px;top:55px;width:1px;height:3px;background:#d8d8d8;"></div>
<div class="r" style="left:546px;top:55px;width:1px;height:3px;background:#d8d8d8;"></div>
<div class="r" style="left:553px;top:55px;width:1px;height:3px;background:#d8d8d8;"></div>
<div class="r" style="left:560px;top:55px;width:1px;height:3px;background:#d8d8d8;"></div>
<div class="r" style="left:567px;top:55px;width:1px;height:3px;background:#d8d8d8;"></div>
<div class="r" style="left:574px;top:55px;width:1px;height:3px;background:#d8d8d8;"></div>
<div class="r" style="left:581px;top:55px;width:1px;height:3px;background:#d8d8d8;"></div>
<div class="r" style="left:587px;top:55px;width:1px;height:3px;background:#d8d8d8;"></div>
<div class="r" style="left:594px;top:52px;width:1px;height:6px;background:#d8d8d8;"></div>
<div class="r" style="left:601px;top:55px;width:1px;height:3px;background:#d8d8d8;"></div>
<div class="r" style="left:608px;top:55px;width:1px;height:3px;background:#d8d8d8;"></div>
<div class="r" style="left:615px;top:55px;width:1px;height:3px;background:#d8d8d8;"></div>
<div class="r" style="left:622px;top:55px;width:1px;height:3px;background:#d8d8d8;"></div>
<div class="r" style="left:628px;top:55px;width:1px;height:3px;background:#d8d8d8;"></div>
<div class="r" style="left:635px;top:55px;width:1px;height:3px;background:#d8d8d8;"></div>
<div class="r" style="left:642px;top:55px;width:1px;height:3px;background:#d8d8d8;"></div>
<div class="r" style="left:310px;top:57px;width:335px;height:1px;background:#d8d8d8;"></div>
<div class="r" style="left:306px;top:33px;width:66px;height:26px;background:#7f7a00;"></div>
<div class="t" style="left:306px;width:66px;text-align:center;top:38px;color:#141414;font-size:12px;">3741.76µs</div>
<div class="t" style="left:303px;top:31px;color:#ffffff;font-size:9px;font-weight:bold;">3</div>
<div class="t" style="left:372px;top:31px;color:#ffffff;font-size:9px;font-weight:bold;">38</div>
<div class="r" style="left:379px;top:33px;width:66px;height:25px;background:#ececec;"></div>
<div class="t" style="left:379px;width:66px;text-align:center;top:38px;color:#9a9a9a;font-size:12px;">3816.72µs</div>
<div class="t" style="left:446px;top:31px;color:#ffffff;font-size:9px;font-weight:bold;">850µs</div>
<div class="r" style="left:507px;top:33px;width:137px;height:26px;background:#00007e;"></div>
<div class="t" style="left:509px;top:31px;color:#14148c;font-size:9px;font-weight:bold;">3900µs</div>
<div class="t" style="left:577px;top:31px;color:#14148c;font-size:9px;font-weight:bold;">3950µs</div>
<div class="t" style="left:507px;width:137px;text-align:center;top:38px;color:#ffffff;font-size:12px;">3986.3µs Δt=244.544µs</div>
<div class="r" style="left:647px;top:32px;width:14px;height:650px;background:#2e2e2e;"></div>
<div class="r" style="left:647px;top:32px;width:13px;height:13px;background:#484848;border:1px solid #3a3a3a;"></div>
<svg style="left:649px;top:35px" width="10" height="6"><path d="M0 6L5 1 10 6Z" fill="#b8b8b8"/></svg>
<div class="r" style="left:647px;top:46px;width:13px;height:400px;background:#424242;border:1px solid #383838;"></div>
<div class="r" style="left:647px;top:668px;width:13px;height:13px;background:#484848;border:1px solid #3a3a3a;"></div>
<svg style="left:649px;top:672px" width="10" height="6"><path d="M0 0L5 5 10 0Z" fill="#b8b8b8"/></svg>
<div class="r" style="left:310px;top:681px;width:335px;height:14px;background:#3a3a3a;"></div>
<div class="r" style="left:310px;top:681px;width:14px;height:14px;background:#454545;border:1px solid #3a3a3a;"></div>
<svg style="left:314px;top:684px" width="6" height="9"><path d="M6 0L1 4.5 6 9Z" fill="#b0b0b0"/></svg>
<div class="r" style="left:631px;top:681px;width:14px;height:14px;background:#454545;border:1px solid #3a3a3a;"></div>
<svg style="left:635px;top:684px" width="6" height="9"><path d="M0 0L5 4.5 0 9Z" fill="#b0b0b0"/></svg>
<div class="r" style="left:324px;top:681px;width:307px;height:14px;background:#3a3a3a;"></div>
<div class="r" style="left:545px;top:681px;width:58px;height:14px;background:#454545;"></div>
<div class="r" style="left:545px;top:681px;width:15px;height:14px;background:#404040;border:1px solid #525252;border-radius:3px;"></div>
<div class="r" style="left:588px;top:681px;width:15px;height:14px;background:#404040;border:1px solid #525252;border-radius:3px;"></div>
<div class="r" style="left:662px;top:31px;width:3px;height:667px;background:#2f2f2f;"></div>
<div class="r" style="left:663px;top:356px;width:2px;height:1px;background:#6a6a6a;"></div>
<div class="r" style="left:663px;top:359px;width:2px;height:1px;background:#6a6a6a;"></div>
<div class="r" style="left:663px;top:362px;width:2px;height:1px;background:#6a6a6a;"></div>
<div class="r" style="left:663px;top:365px;width:2px;height:1px;background:#6a6a6a;"></div>
<div class="r" style="left:663px;top:368px;width:2px;height:1px;background:#6a6a6a;"></div>
<div class="r" style="left:663px;top:371px;width:2px;height:1px;background:#6a6a6a;"></div>
<svg style="left:0;top:0" width="1331" height="698">
<path d="M334 611V536H336V532H338V534H340V532H342V533H344V533H346V531H348V532H350V530H352V530H354V528H356V527H358V527H360V528H362V524H364V525H366V526H368V526H370V525H372V524H374V526H376V523H378V525H380V523H382V522H384V522H386V522H388V524H390V523H392V524H394V525H396V524H398V525H400V523H402V523H404V524H406V525H408V525H410V524H412V525H414V525H416V524H418V526H420V525H422V524H424V525H426V524H428V525H430V525H432V523H434V525H436V522H438V523H440V524H442V522H444V523H446V521H448V523H450V523H452V522H454V522H456V521H458V521H460V521H462V521H464V521H466V522H468V522H470V521H472V522H474V520H476V522H478V522H480V523H482V523H484V521H486V522H488V523H490V521H492V523H494V522H496V522H498V522H500V525H502V523H504V524H506V524H508V526H510V524H512V525H514V525H516V526H518V526H520V526H522V525H524V525H526V525H528V527H530V527H532V525H534V525H536V525H538V525H540V526H542V526H544V525H546V525H548V526H550V526H552V527H554V528H556V527H558V527H560V527H562V528H564V526H566V529H568V528H570V529H572V529H574V527H576V528H578V527H580V529H582V527H584V527H586V528H588V528H590V529H592V528H594V528H596V529H598V529H600V530H602V529H604V532H606V532H608V531H610V611Z" fill="#fbbd2a"/>
<path d="M334 611V535H336V533H338V533H340V533H342V535H344V536H346V534H348V535H350V534H352V534H354V535H356V534H358V536H360V534H362V534H364V537H366V536H368V535H370V536H372V534H374V536H376V537H378V536H380V536H382V534H384V534H386V534H388V535H390V534H392V535H394V533H396V533H398V534H400V535H402V534H404V534H406V534H408V534H410V532H412V533H414V533H416V532H418V532H420V533H422V533H424V534H426V535H428V534H430V535H432V535H434V535H436V534H438V533H440V533H442V533H444V534H446V535H448V536H450V536H452V534H454V535H456V535H458V533H460V535H462V535H464V535H466V535H468V534H470V533H472V535H474V534H476V535H478V536H480V534H482V535H484V536H486V536H488V534H490V534H492V535H494V537H496V537H498V535H500V537H502V537H504V536H506V535H508V536H510V534H512V534H514V537H516V536H518V536H520V537H522V536H524V537H526V537H528V535H530V535H532V535H534V535H536V536H538V535H540V535H542V534H544V537H546V535H548V535H550V535H552V536H554V535H556V536H558V535H560V535H562V535H564V533H566V535H568V534H570V533H572V536H574V534H576V535H578V536H580V535H582V535H584V535H586V535H588V536H590V534H592V536H594V535H596V535H598V536H600V536H602V536H604V537H606V537H608V536H610V611Z" fill="#c800e6"/>
<path d="M334 611V553H336V552H338V552H340V551H342V550H344V549H346V548H348V548H350V546H352V546H354V545H356V542H358V542H360V542H362V541H364V539H366V538H368V539H370V537H372V538H374V537H376V539H378V539H380V540H382V538H384V540H386V540H388V539H390V540H392V541H394V539H396V541H398V540H400V541H402V543H404V543H406V542H408V543H410V544H412V544H414V544H416V544H418V545H420V544H422V545H424V544H426V543H428V544H430V545H432V544H434V543H436V545H438V545H440V546H442V544H444V545H446V545H448V547H450V546H452V545H454V546H456V548H458V548H460V546H462V546H464V548H466V548H468V548H470V547H472V547H474V549H476V548H478V547H480V550H482V549H484V550H486V548H488V550H490V548H492V550H494V550H496V549H498V550H500V551H502V549H504V549H506V550H508V549H510V549H512V549H514V549H516V549H518V549H520V549H522V550H524V549H526V550H528V549H530V549H532V548H534V548H536V548H538V549H540V548H542V547H544V547H546V548H548V546H550V547H552V546H554V546H556V546H558V544H560V545H562V546H564V547H566V546H568V547H570V547H572V548H574V548H576V548H578V548H580V548H582V549H584V551H586V551H588V551H590V552H592V554H594V555H596V555H598V555H600V556H602V557H604V558H606V558H608V560H610V611Z" fill="#00acd8"/>
<path d="M334 611V568H336V573H338V576H340V576H342V576H344V578H346V577H348V577H350V576H352V578H354V578H356V579H358V578H360V579H362V578H364V579H366V579H368V580H370V579H372V580H374V581H376V581H378V582H380V582H382V583H384V584H386V584H388V585H390V584H392V584H394V586H396V584H398V586H400V586H402V585H404V587H406V587H408V587H410V587H412V588H414V586H416V587H418V587H420V588H422V588H424V588H426V588H428V589H430V588H432V589H434V587H436V587H438V587H440V588H442V588H444V590H446V589H448V590H450V590H452V590H454V590H456V588H458V591H460V591H462V590H464V591H466V591H468V590H470V592H472V591H474V590H476V591H478V593H480V591H482V593H484V594H486V593H488V593H490V593H492V593H494V593H496V593H498V593H500V591H502V591H504V591H506V592H508V591H510V591H512V589H514V589H516V590H518V591H520V591H522V590H524V589H526V589H528V589H530V589H532V587H534V589H536V587H538V589H540V589H542V586H544V587H546V588H548V588H550V587H552V586H554V586H556V588H558V586H560V587H562V585H564V585H566V586H568V583H570V585H572V583H574V584H576V583H578V581H580V583H582V581H584V580H586V580H588V581H590V580H592V580H594V579H596V579H598V579H600V580H602V578H604V579H606V578H608V575H610V611Z" fill="#f07838"/>
<path d="M610 531 L613 530 L615 531 L617 532 L617 536 L620 536 L620 543 L623 543 L623 537 L627 537 L627 540 L630 540 L636 541 L637 553 L639 560 L640 570 L640 601 L610 601Z" fill="#fbbd2a"/>
<path d="M610 538 L615 538 L617 538 L620 540 L620 543 L623 543 L623 540 L630 540 L633 541 L636 548 L638 558 L639 570 L640 601 L610 601Z" fill="#c800e6"/>
<path d="M610 561 L612 562 L614 559 L617 557 L620 557 L623 559 L627 560 L630 561 L632 569 L634 575 L636 577 L638 583 L639 590 L640 601 L610 601Z" fill="#00acd8"/>
<path d="M610 581 L612 580 L614 578 L616 576 L618 573 L620 571 L622 569 L624 567 L627 567 L629 569 L631 572 L633 575 L635 579 L637 585 L639 592 L640 601 L610 601Z" fill="#f07838"/>
<rect x="620" y="542" width="2" height="18" fill="#fbbd2a"/>
<path d="M629 541 L634 541 L639 574 L639 580 L636 580Z" fill="#fbbd2a"/>
<rect x="310" y="601" width="3" height="10" fill="#fbbd2a"/>
<rect x="311" y="595" width="2" height="6" fill="#c800e6"/>
<rect x="312" y="588" width="1" height="7" fill="#f07838"/>
<rect x="313" y="566" width="14" height="35" fill="#00acd8"/>
<rect x="313" y="559" width="14" height="7" fill="#fbbd2a"/>
<path d="M314 559V549H316V546H318V544H324V543H327V559H314Z" fill="#c800e6"/>
<path d="M315 560V550H317V560Z M320 548V540H321V538H323V540H324V548Z" fill="#f07838"/>
<rect x="324" y="552" width="3" height="7" fill="#fbbd2a"/>
<path d="M327 601V558L330 561 334 565V601Z" fill="#f07838"/>
<path d="M327 558V553L330 552 334 550V565L330 561Z" fill="#00acd8"/>
<path d="M327 553V545H330V541H332V538H334V550L330 552Z" fill="#fbbd2a"/>
<path d="M327 545V543H330V541H327Z" fill="#c800e6"/>
<rect x="313" y="600" width="331" height="10" fill="#3e7cf0"/>
<rect x="316" y="600" width="3" height="2" fill="#f07838"/>
<rect x="326" y="600" width="3" height="2" fill="#f07838"/>
<rect x="335" y="600" width="3" height="2" fill="#f07838"/>
<rect x="345" y="600" width="3" height="2" fill="#f07838"/>
<rect x="355" y="600" width="3" height="2" fill="#f07838"/>
<rect x="364" y="600" width="3" height="2" fill="#f07838"/>
<rect x="374" y="600" width="3" height="2" fill="#f07838"/>
<rect x="384" y="600" width="3" height="2" fill="#f07838"/>
<rect x="394" y="600" width="3" height="2" fill="#f07838"/>
<rect x="403" y="600" width="3" height="2" fill="#f07838"/>
<rect x="413" y="600" width="3" height="2" fill="#f07838"/>
<rect x="423" y="600" width="3" height="2" fill="#f07838"/>
<rect x="432" y="600" width="3" height="2" fill="#f07838"/>
<rect x="442" y="600" width="3" height="2" fill="#f07838"/>
<rect x="452" y="600" width="3" height="2" fill="#f07838"/>
<rect x="461" y="600" width="3" height="2" fill="#f07838"/>
<rect x="471" y="600" width="3" height="2" fill="#f07838"/>
<rect x="481" y="600" width="3" height="2" fill="#f07838"/>
<rect x="491" y="600" width="3" height="2" fill="#f07838"/>
<rect x="500" y="600" width="3" height="2" fill="#f07838"/>
<rect x="510" y="600" width="3" height="2" fill="#f07838"/>
<rect x="520" y="600" width="3" height="2" fill="#f07838"/>
<rect x="529" y="600" width="3" height="2" fill="#f07838"/>
<rect x="539" y="600" width="3" height="2" fill="#f07838"/>
<rect x="549" y="600" width="3" height="2" fill="#f07838"/>
<rect x="558" y="600" width="3" height="2" fill="#f07838"/>
<rect x="568" y="600" width="3" height="2" fill="#f07838"/>
<rect x="578" y="600" width="3" height="2" fill="#f07838"/>
<rect x="588" y="600" width="3" height="2" fill="#f07838"/>
<rect x="597" y="600" width="3" height="2" fill="#f07838"/>
<rect x="607" y="600" width="3" height="2" fill="#f07838"/>
<rect x="617" y="600" width="3" height="2" fill="#f07838"/>
<rect x="626" y="600" width="3" height="2" fill="#f07838"/>
<rect x="310" y="610" width="335" height="1" fill="#c03048"/>
</svg>
<div class="r" style="left:666px;top:34px;width:76px;height:23px;background:#383838;border:1px solid #4a4a4a;border-bottom:none;border-radius:3px 3px 0 0;"></div>
<div class="t" style="left:666px;width:76px;text-align:center;top:38px;color:#e8e8e8;font-size:12px;">Summary</div>
<div class="r" style="left:806px;top:34px;width:119px;height:23px;background:#383838;border:1px solid #4a4a4a;border-bottom:none;border-radius:3px 3px 0 0;"></div>
<div class="t" style="left:806px;width:119px;text-align:center;top:38px;color:#e8e8e8;font-size:12px;">Trace Information</div>
<div class="r" style="left:1326px;top:56px;width:5px;height:642px;background:#2f2f2f;"></div>
<div class="r" style="left:665px;top:56px;width:661px;height:638px;background:#434343;border:1px solid #575757;box-shadow:0 0 0 1px #2c2c2c;"></div>
<div class="r" style="left:743px;top:32px;width:63px;height:26px;background:#444444;border:1px solid #525252;border-bottom:none;border-radius:3px 3px 0 0;"></div>
<div class="t" style="left:743px;width:63px;text-align:center;top:37px;color:#e8e8e8;font-size:12px;">Metrics</div>
<div class="t" style="left:694px;top:75px;color:#e4e4e4;font-size:12px;">Start:</div>
<div class="t" style="left:738px;top:75px;color:#e4e4e4;font-size:12px;">3.74 ms</div>
<div class="t" style="left:694px;top:95px;color:#e4e4e4;font-size:12px;">End:</div>
<div class="t" style="left:738px;top:95px;color:#e4e4e4;font-size:12px;">3.99 ms</div>
<div class="t" style="left:1008px;top:75px;color:#e4e4e4;font-size:12px;">Duration:</div>
<div class="t" style="left:1073px;top:75px;color:#e4e4e4;font-size:12px;">0.24 ±</div>
<div class="t" style="left:1008px;top:95px;color:#e4e4e4;font-size:12px;">Range:</div>
<div class="t" style="left:1073px;top:95px;color:#e4e4e4;font-size:12px;">Event Selection</div>
<div class="r" style="left:676px;top:124px;width:640px;height:22px;background:#2a2a2a;border-radius:4px;"></div>
<div class="t" style="left:679px;top:128px;color:#8c8c8c;font-size:12px;">Search...</div>
<div class="r" style="left:676px;top:152px;width:640px;height:534px;background:#333333;"></div>
<div class="r" style="left:1302px;top:153px;width:14px;height:532px;background:#383838;"></div>
<div class="r" style="left:1302px;top:153px;width:14px;height:14px;background:#4a4a4a;border:1px solid #3a3a3a;"></div>
<svg style="left:1304px;top:157px" width="10" height="6"><path d="M0 6L5 1 10 6Z" fill="#c0c0c0"/></svg>
<div class="r" style="left:1302px;top:167px;width:14px;height:70px;background:#484848;border:1px solid #3c3c3c;"></div>
<div class="r" style="left:1302px;top:671px;width:14px;height:14px;background:#4a4a4a;border:1px solid #3a3a3a;"></div>
<svg style="left:1304px;top:675px" width="10" height="6"><path d="M0 0L5 5 10 0Z" fill="#c0c0c0"/></svg>
<div class="r" style="left:677px;top:152px;width:624px;height:92px;background:#2f2f2f;"></div>
<div class="r" style="left:678px;top:153px;width:622px;height:18px;background:linear-gradient(#414141,#3b3b3b);"></div>
<div class="r" style="left:678px;top:153px;width:622px;height:1px;background:#2a2a2a;"></div>
<div class="r" style="left:678px;top:154px;width:622px;height:1px;background:#4c4c4c;"></div>
<div class="t" style="left:678px;width:418px;text-align:center;top:156px;color:#e6e6e6;font-size:12px;">GPU Active</div>
<div class="t" style="left:1096px;width:99px;text-align:center;top:156px;color:#e6e6e6;font-size:12px;">Throughput %</div>
<div class="r" style="left:1096px;top:153px;width:1px;height:18px;background:#575757;"></div>
<svg style="left:1196px;top:160px" width="8" height="5"><path d="M0 0.5H8L4 4.5Z" fill="#c8c8c8"/></svg>
<div class="t" style="left:1208px;width:92px;text-align:center;top:156px;color:#e6e6e6;font-size:12px;">Workloads</div>
<div class="r" style="left:1208px;top:153px;width:1px;height:18px;background:#575757;"></div>
<div class="r" style="left:678px;top:171px;width:622px;height:72px;background:#2a2a2a;"></div>
<div class="r" style="left:678px;top:189px;width:622px;height:1px;background:#3b3b3b;"></div>
<div class="r" style="left:1096px;top:171px;width:1px;height:18px;background:#3b3b3b;"></div>
<div class="r" style="left:1208px;top:171px;width:1px;height:18px;background:#3b3b3b;"></div>
<div class="r" style="left:683px;top:174px;width:14px;height:14px;background:#000000;"></div>
<div class="r" style="left:684px;top:175px;width:12px;height:12px;background:#34b2b2;"></div>
<div class="t" style="left:703px;top:173px;color:#ececec;font-size:12px;">GPU Active</div>
<div class="t" style="right:172px;top:173px;color:#ececec;font-size:12px;text-align:right;">100.0%</div>
<div class="r" style="left:1164px;top:176px;width:43px;height:12px;background:#3a7cc0;"></div>
<div class="t" style="right:35px;top:173px;color:#ececec;font-size:12px;text-align:right;">368.751.0</div>
<div class="r" style="left:678px;top:207px;width:622px;height:1px;background:#3b3b3b;"></div>
<div class="r" style="left:1096px;top:189px;width:1px;height:18px;background:#3b3b3b;"></div>
<div class="r" style="left:1208px;top:189px;width:1px;height:18px;background:#3b3b3b;"></div>
<div class="r" style="left:683px;top:192px;width:14px;height:14px;background:#000000;"></div>
<div class="r" style="left:684px;top:193px;width:12px;height:12px;background:#ffff00;"></div>
<div class="t" style="left:703px;top:191px;color:#ececec;font-size:12px;">GR Active</div>
<div class="t" style="right:172px;top:191px;color:#ececec;font-size:12px;text-align:right;">100.0%</div>
<div class="r" style="left:1164px;top:194px;width:43px;height:12px;background:#3a7cc0;"></div>
<div class="t" style="right:35px;top:191px;color:#ececec;font-size:12px;text-align:right;">368.751.0</div>
<div class="r" style="left:678px;top:225px;width:622px;height:1px;background:#3b3b3b;"></div>
<div class="r" style="left:1096px;top:207px;width:1px;height:18px;background:#3b3b3b;"></div>
<div class="r" style="left:1208px;top:207px;width:1px;height:18px;background:#3b3b3b;"></div>
<div class="r" style="left:683px;top:210px;width:14px;height:14px;background:#000000;"></div>
<div class="r" style="left:684px;top:211px;width:12px;height:12px;background:#b2b232;"></div>
<div class="t" style="left:703px;top:209px;color:#ececec;font-size:12px;">Sync Copy Engine Active</div>
<div class="t" style="right:172px;top:209px;color:#ececec;font-size:12px;text-align:right;">0%</div>
<div class="t" style="right:35px;top:209px;color:#ececec;font-size:12px;text-align:right;">0.0</div>
<div class="r" style="left:678px;top:243px;width:622px;height:1px;background:#3b3b3b;"></div>
<div class="r" style="left:1096px;top:225px;width:1px;height:18px;background:#3b3b3b;"></div>
<div class="r" style="left:1208px;top:225px;width:1px;height:18px;background:#3b3b3b;"></div>
<div class="r" style="left:683px;top:228px;width:14px;height:14px;background:#000000;"></div>
<div class="r" style="left:684px;top:229px;width:12px;height:12px;background:#ffa200;"></div>
<div class="t" style="left:703px;top:227px;color:#ececec;font-size:12px;">Async Copy Engine Active</div>
<div class="t" style="right:172px;top:227px;color:#ececec;font-size:12px;text-align:right;">0%</div>
<div class="t" style="right:35px;top:227px;color:#ececec;font-size:12px;text-align:right;">0.0</div>
<div class="r" style="left:677px;top:250px;width:624px;height:236px;background:#2f2f2f;"></div>
<div class="r" style="left:678px;top:251px;width:622px;height:18px;background:linear-gradient(#414141,#3b3b3b);"></div>
<div class="r" style="left:678px;top:251px;width:622px;height:1px;background:#2a2a2a;"></div>
<div class="r" style="left:678px;top:252px;width:622px;height:1px;background:#4c4c4c;"></div>
<div class="t" style="left:678px;width:509px;text-align:center;top:254px;color:#e6e6e6;font-size:12px;">Unit Throughputs</div>
<div class="t" style="left:1187px;width:100px;text-align:center;top:254px;color:#e6e6e6;font-size:12px;">Throughput %</div>
<div class="r" style="left:1187px;top:251px;width:1px;height:18px;background:#575757;"></div>
<svg style="left:1288px;top:258px" width="8" height="5"><path d="M0 0.5H8L4 4.5Z" fill="#c8c8c8"/></svg>
<div class="r" style="left:678px;top:269px;width:622px;height:216px;background:#2a2a2a;"></div>
<div class="r" style="left:678px;top:287px;width:622px;height:1px;background:#3b3b3b;"></div>
<div class="r" style="left:1187px;top:269px;width:1px;height:18px;background:#3b3b3b;"></div>
<div class="r" style="left:683px;top:272px;width:14px;height:14px;background:#000000;"></div>
<div class="r" style="left:684px;top:273px;width:12px;height:12px;background:#fbbd2a;"></div>
<div class="t" style="left:703px;top:271px;color:#ececec;font-size:12px;">L1TEX Throughput</div>
<div class="t" style="right:81px;top:271px;color:#ececec;font-size:12px;text-align:right;">78.1%</div>
<div class="r" style="left:1255px;top:274px;width:34px;height:12px;background:#3a7cc0;"></div>
<div class="r" style="left:678px;top:305px;width:622px;height:1px;background:#3b3b3b;"></div>
<div class="r" style="left:1187px;top:287px;width:1px;height:18px;background:#3b3b3b;"></div>
<div class="r" style="left:683px;top:290px;width:14px;height:14px;background:#000000;"></div>
<div class="r" style="left:684px;top:291px;width:12px;height:12px;background:#c800e6;"></div>
<div class="t" style="left:703px;top:289px;color:#ececec;font-size:12px;">SM Throughput</div>
<div class="t" style="right:81px;top:289px;color:#ececec;font-size:12px;text-align:right;">71.1%</div>
<div class="r" style="left:1255px;top:292px;width:31px;height:12px;background:#3a7cc0;"></div>
<div class="r" style="left:678px;top:323px;width:622px;height:1px;background:#3b3b3b;"></div>
<div class="r" style="left:1187px;top:305px;width:1px;height:18px;background:#3b3b3b;"></div>
<div class="r" style="left:683px;top:308px;width:14px;height:14px;background:#000000;"></div>
<div class="r" style="left:684px;top:309px;width:12px;height:12px;background:#00acd8;"></div>
<div class="t" style="left:703px;top:307px;color:#ececec;font-size:12px;">L2 Throughput</div>
<div class="t" style="right:81px;top:307px;color:#ececec;font-size:12px;text-align:right;">60.0%</div>
<div class="r" style="left:1255px;top:310px;width:26px;height:12px;background:#3a7cc0;"></div>
<div class="r" style="left:678px;top:341px;width:622px;height:1px;background:#3b3b3b;"></div>
<div class="r" style="left:1187px;top:323px;width:1px;height:18px;background:#3b3b3b;"></div>
<div class="r" style="left:683px;top:326px;width:14px;height:14px;background:#000000;"></div>
<div class="r" style="left:684px;top:327px;width:12px;height:12px;background:#f07838;"></div>
<div class="t" style="left:703px;top:325px;color:#ececec;font-size:12px;">VRAM Throughput</div>
<div class="t" style="right:81px;top:325px;color:#ececec;font-size:12px;text-align:right;">26.4%</div>
<div class="r" style="left:1255px;top:328px;width:12px;height:12px;background:#3a7cc0;"></div>
<div class="r" style="left:678px;top:359px;width:622px;height:1px;background:#3b3b3b;"></div>
<div class="r" style="left:1187px;top:341px;width:1px;height:18px;background:#3b3b3b;"></div>
<div class="r" style="left:683px;top:344px;width:14px;height:14px;background:#000000;"></div>
<div class="r" style="left:684px;top:345px;width:12px;height:12px;background:#3d76ec;"></div>
<div class="t" style="left:703px;top:343px;color:#ececec;font-size:12px;">PCIe Throughput</div>
<div class="t" style="right:81px;top:343px;color:#ececec;font-size:12px;text-align:right;">9.1%</div>
<div class="r" style="left:1255px;top:346px;width:4px;height:12px;background:#3a7cc0;"></div>
<div class="r" style="left:678px;top:377px;width:622px;height:1px;background:#3b3b3b;"></div>
<div class="r" style="left:1187px;top:359px;width:1px;height:18px;background:#3b3b3b;"></div>
<div class="r" style="left:683px;top:362px;width:14px;height:14px;background:#000000;"></div>
<div class="r" style="left:684px;top:363px;width:12px;height:12px;background:#a8b85a;"></div>
<div class="t" style="left:703px;top:361px;color:#ececec;font-size:12px;">PROP Throughput</div>
<div class="t" style="right:81px;top:361px;color:#ececec;font-size:12px;text-align:right;">&lt; 0.1%</div>
<div class="r" style="left:1255px;top:364px;width:2px;height:12px;background:#3a7cc0;"></div>
<div class="r" style="left:678px;top:395px;width:622px;height:1px;background:#3b3b3b;"></div>
<div class="r" style="left:1187px;top:377px;width:1px;height:18px;background:#3b3b3b;"></div>
<div class="r" style="left:683px;top:380px;width:14px;height:14px;background:#000000;"></div>
<div class="r" style="left:684px;top:381px;width:12px;height:12px;background:#d83044;"></div>
<div class="t" style="left:703px;top:379px;color:#ececec;font-size:12px;">VAF Throughput</div>
<div class="t" style="right:81px;top:379px;color:#ececec;font-size:12px;text-align:right;">0%</div>
<div class="r" style="left:678px;top:413px;width:622px;height:1px;background:#3b3b3b;"></div>
<div class="r" style="left:1187px;top:395px;width:1px;height:18px;background:#3b3b3b;"></div>
<div class="r" style="left:683px;top:398px;width:14px;height:14px;background:#000000;"></div>
<div class="r" style="left:684px;top:399px;width:12px;height:12px;background:#00b050;"></div>
<div class="t" style="left:703px;top:397px;color:#ececec;font-size:12px;">PD Throughput</div>
<div class="t" style="right:81px;top:397px;color:#ececec;font-size:12px;text-align:right;">0%</div>
<div class="r" style="left:678px;top:431px;width:622px;height:1px;background:#3b3b3b;"></div>
<div class="r" style="left:1187px;top:413px;width:1px;height:18px;background:#3b3b3b;"></div>
<div class="r" style="left:683px;top:416px;width:14px;height:14px;background:#000000;"></div>
<div class="r" style="left:684px;top:417px;width:12px;height:12px;background:#40b062;"></div>
<div class="t" style="left:703px;top:415px;color:#ececec;font-size:12px;">PES+VPC Throughput</div>
<div class="t" style="right:81px;top:415px;color:#ececec;font-size:12px;text-align:right;">0%</div>
<div class="r" style="left:678px;top:449px;width:622px;height:1px;background:#3b3b3b;"></div>
<div class="r" style="left:1187px;top:431px;width:1px;height:18px;background:#3b3b3b;"></div>
<div class="r" style="left:683px;top:434px;width:14px;height:14px;background:#000000;"></div>
<div class="r" style="left:684px;top:435px;width:12px;height:12px;background:#68b05a;"></div>
<div class="t" style="left:703px;top:433px;color:#ececec;font-size:12px;">RASTER Throughput</div>
<div class="t" style="right:81px;top:433px;color:#ececec;font-size:12px;text-align:right;">0%</div>
<div class="r" style="left:678px;top:467px;width:622px;height:1px;background:#3b3b3b;"></div>
<div class="r" style="left:1187px;top:449px;width:1px;height:18px;background:#3b3b3b;"></div>
<div class="r" style="left:683px;top:452px;width:14px;height:14px;background:#000000;"></div>
<div class="r" style="left:684px;top:453px;width:12px;height:12px;background:#8a4a44;"></div>
<div class="t" style="left:703px;top:451px;color:#ececec;font-size:12px;">ZROP Throughput</div>
<div class="t" style="right:81px;top:451px;color:#ececec;font-size:12px;text-align:right;">0%</div>
<div class="r" style="left:678px;top:485px;width:622px;height:1px;background:#3b3b3b;"></div>
<div class="r" style="left:1187px;top:467px;width:1px;height:18px;background:#3b3b3b;"></div>
<div class="r" style="left:683px;top:470px;width:14px;height:14px;background:#000000;"></div>
<div class="r" style="left:684px;top:471px;width:12px;height:12px;background:#b0b05a;"></div>
<div class="t" style="left:703px;top:469px;color:#ececec;font-size:12px;">CROP Throughput</div>
<div class="t" style="right:81px;top:469px;color:#ececec;font-size:12px;text-align:right;">0%</div>
<div class="r" style="left:677px;top:492px;width:624px;height:56px;background:#2f2f2f;"></div>
<div class="r" style="left:678px;top:493px;width:622px;height:18px;background:linear-gradient(#414141,#3b3b3b);"></div>
<div class="r" style="left:678px;top:493px;width:622px;height:1px;background:#2a2a2a;"></div>
<div class="r" style="left:678px;top:494px;width:622px;height:1px;background:#4c4c4c;"></div>
<div class="t" style="left:678px;width:509px;text-align:center;top:496px;color:#e6e6e6;font-size:12px;">Compute In Flight</div>
<div class="t" style="left:1187px;width:100px;text-align:center;top:496px;color:#e6e6e6;font-size:12px;">Throughput %</div>
<div class="r" style="left:1187px;top:493px;width:1px;height:18px;background:#575757;"></div>
<svg style="left:1288px;top:500px" width="8" height="5"><path d="M0 0.5H8L4 4.5Z" fill="#c8c8c8"/></svg>
<div class="r" style="left:678px;top:511px;width:622px;height:36px;background:#2a2a2a;"></div>
<div class="r" style="left:678px;top:529px;width:622px;height:1px;background:#3b3b3b;"></div>
<div class="r" style="left:1187px;top:511px;width:1px;height:18px;background:#3b3b3b;"></div>
<div class="r" style="left:683px;top:514px;width:14px;height:14px;background:#000000;"></div>
<div class="r" style="left:684px;top:515px;width:12px;height:12px;background:#ff88a2;"></div>
<div class="t" style="left:703px;top:513px;color:#ececec;font-size:12px;">Sync Compute In Flight</div>
<div class="t" style="right:81px;top:513px;color:#ececec;font-size:12px;text-align:right;">98.8%</div>
<div class="r" style="left:1255px;top:516px;width:43px;height:12px;background:#3a7cc0;"></div>
<div class="r" style="left:678px;top:547px;width:622px;height:1px;background:#3b3b3b;"></div>
<div class="r" style="left:1187px;top:529px;width:1px;height:18px;background:#3b3b3b;"></div>
<div class="r" style="left:683px;top:532px;width:14px;height:14px;background:#000000;"></div>
<div class="r" style="left:684px;top:533px;width:12px;height:12px;background:#f0a822;"></div>
<div class="t" style="left:703px;top:531px;color:#ececec;font-size:12px;">Async Compute In Flight</div>
<div class="t" style="right:81px;top:531px;color:#ececec;font-size:12px;text-align:right;">0%</div>
<div class="r" style="left:677px;top:554px;width:624px;height:56px;background:#2f2f2f;"></div>
<div class="r" style="left:678px;top:555px;width:622px;height:18px;background:linear-gradient(#414141,#3b3b3b);"></div>
<div class="r" style="left:678px;top:555px;width:622px;height:1px;background:#2a2a2a;"></div>
<div class="r" style="left:678px;top:556px;width:622px;height:1px;background:#4c4c4c;"></div>
<div class="t" style="left:678px;width:530px;text-align:center;top:558px;color:#e6e6e6;font-size:12px;">Draw/Dispatch Start</div>
<div class="t" style="left:1208px;width:79px;text-align:center;top:558px;color:#e6e6e6;font-size:12px;">Workloads</div>
<div class="r" style="left:1208px;top:555px;width:1px;height:18px;background:#575757;"></div>
<svg style="left:1288px;top:562px" width="8" height="5"><path d="M0 0.5H8L4 4.5Z" fill="#c8c8c8"/></svg>
<div class="r" style="left:678px;top:573px;width:622px;height:36px;background:#2a2a2a;"></div>
<div class="r" style="left:678px;top:591px;width:622px;height:1px;background:#3b3b3b;"></div>
<div class="r" style="left:1208px;top:573px;width:1px;height:18px;background:#3b3b3b;"></div>
<div class="r" style="left:683px;top:576px;width:14px;height:14px;background:#000000;"></div>
<div class="r" style="left:684px;top:577px;width:12px;height:12px;background:#00e8e8;"></div>
<div class="t" style="left:703px;top:575px;color:#ececec;font-size:12px;">Dispatch Started</div>
<div class="t" style="right:35px;top:575px;color:#ececec;font-size:12px;text-align:right;">1.0</div>
<div class="r" style="left:678px;top:609px;width:622px;height:1px;background:#3b3b3b;"></div>
<div class="r" style="left:1208px;top:591px;width:1px;height:18px;background:#3b3b3b;"></div>
<div class="r" style="left:683px;top:594px;width:14px;height:14px;background:#000000;"></div>
<div class="r" style="left:684px;top:595px;width:12px;height:12px;background:#f0f000;"></div>
<div class="t" style="left:703px;top:593px;color:#ececec;font-size:12px;">Draw Started</div>
<div class="t" style="right:35px;top:593px;color:#ececec;font-size:12px;text-align:right;">0.0</div>
<div class="r" style="left:677px;top:616px;width:624px;height:70px;background:#2f2f2f;"></div>
<div class="r" style="left:678px;top:617px;width:622px;height:18px;background:linear-gradient(#414141,#3b3b3b);"></div>
<div class="r" style="left:678px;top:617px;width:622px;height:1px;background:#2a2a2a;"></div>
<div class="r" style="left:678px;top:618px;width:622px;height:1px;background:#4c4c4c;"></div>
<div class="t" style="left:678px;width:276px;text-align:center;top:620px;color:#e6e6e6;font-size:12px;">SM Occupancy (TPC View)</div>
<div class="t" style="left:954px;width:99px;text-align:center;top:620px;color:#e6e6e6;font-size:12px;">Throughput %</div>
<div class="r" style="left:954px;top:617px;width:1px;height:18px;background:#575757;"></div>
<svg style="left:1054px;top:624px" width="8" height="5"><path d="M0 0.5H8L4 4.5Z" fill="#c8c8c8"/></svg>
<div class="t" style="left:1066px;width:79px;text-align:center;top:620px;color:#e6e6e6;font-size:12px;">Avg</div>
<div class="r" style="left:1066px;top:617px;width:1px;height:18px;background:#575757;"></div>
<div class="t" style="left:1145px;width:155px;text-align:center;top:620px;color:#e6e6e6;font-size:12px;">Avg Warps per Cycle</div>
<div class="r" style="left:1145px;top:617px;width:1px;height:18px;background:#575757;"></div>
<div class="r" style="left:678px;top:635px;width:622px;height:50px;background:#2a2a2a;"></div>
<div class="r" style="left:678px;top:653px;width:622px;height:1px;background:#3b3b3b;"></div>
<div class="r" style="left:954px;top:635px;width:1px;height:18px;background:#3b3b3b;"></div>
<div class="r" style="left:1066px;top:635px;width:1px;height:18px;background:#3b3b3b;"></div>
<div class="r" style="left:1145px;top:635px;width:1px;height:18px;background:#3b3b3b;"></div>
<div class="r" style="left:683px;top:638px;width:14px;height:14px;background:#000000;"></div>
<div class="r" style="left:684px;top:639px;width:12px;height:12px;background:#ffa200;"></div>
<div class="t" style="left:703px;top:637px;color:#ececec;font-size:12px;">Compute Warps</div>
<div class="t" style="right:315px;top:637px;color:#ececec;font-size:12px;text-align:right;">83.5%</div>
<div class="r" style="left:1022px;top:640px;width:37px;height:12px;background:#3a7cc0;"></div>
<div class="t" style="right:190px;top:637px;color:#ececec;font-size:12px;text-align:right;">19.543.542.3</div>
<div class="t" style="right:35px;top:637px;color:#ececec;font-size:12px;text-align:right;">53.4</div>
<div class="r" style="left:678px;top:671px;width:622px;height:1px;background:#3b3b3b;"></div>
<div class="r" style="left:954px;top:653px;width:1px;height:18px;background:#3b3b3b;"></div>
<div class="r" style="left:1066px;top:653px;width:1px;height:18px;background:#3b3b3b;"></div>
<div class="r" style="left:1145px;top:653px;width:1px;height:18px;background:#3b3b3b;"></div>
<div class="r" style="left:683px;top:656px;width:14px;height:14px;background:#000000;"></div>
<div class="r" style="left:684px;top:657px;width:12px;height:12px;background:#777777;"></div>
<div class="t" style="left:703px;top:655px;color:#ececec;font-size:12px;">Active SM Unused Warp Slots</div>
<div class="t" style="right:315px;top:655px;color:#ececec;font-size:12px;text-align:right;">14.8%</div>
<div class="r" style="left:1022px;top:658px;width:6px;height:12px;background:#3a7cc0;"></div>
<div class="t" style="right:190px;top:655px;color:#ececec;font-size:12px;text-align:right;">3.454.335.0</div>
<div class="t" style="right:35px;top:655px;color:#ececec;font-size:12px;text-align:right;">9.4</div>
<div class="r" style="left:678px;top:689px;width:622px;height:1px;background:#3b3b3b;"></div>
<div class="r" style="left:954px;top:671px;width:1px;height:18px;background:#3b3b3b;"></div>
<div class="r" style="left:1066px;top:671px;width:1px;height:18px;background:#3b3b3b;"></div>
<div class="r" style="left:1145px;top:671px;width:1px;height:18px;background:#3b3b3b;"></div>
<div class="r" style="left:683px;top:674px;width:14px;height:14px;background:#000000;"></div>
<div class="r" style="left:684px;top:675px;width:12px;height:12px;background:#1050e0;"></div>
<div class="t" style="left:703px;top:673px;color:#ececec;font-size:12px;">Vertex/Tess/Geometry Warps</div>
<div class="t" style="right:315px;top:673px;color:#ececec;font-size:12px;text-align:right;">0%</div>
<div class="t" style="right:190px;top:673px;color:#ececec;font-size:12px;text-align:right;">0.0</div>
<div class="t" style="right:35px;top:673px;color:#ececec;font-size:12px;text-align:right;">0.0</div>
<div class="r" style="left:676px;top:685px;width:626px;height:7px;background:#434343;"></div>
</body></html>
